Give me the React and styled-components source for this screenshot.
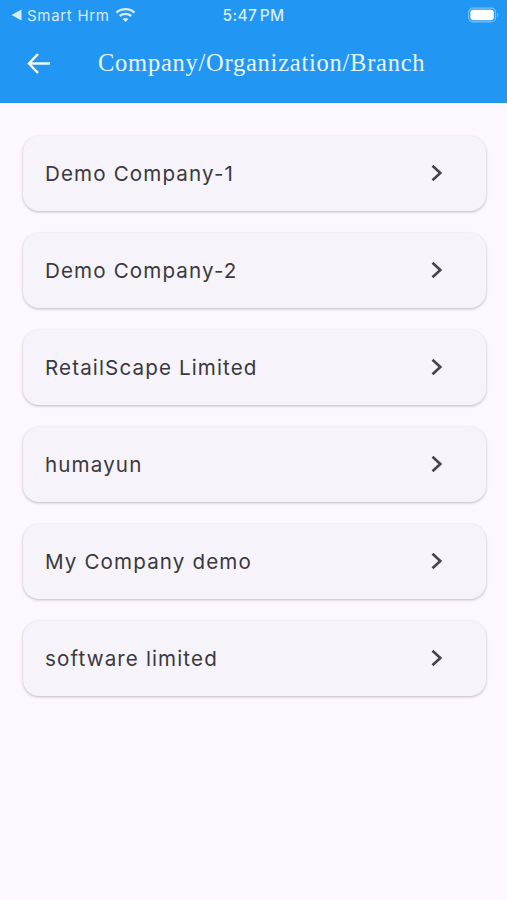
import React from "react";
import styled, { createGlobalStyle } from "styled-components";

const Global = createGlobalStyle`
  html, body { margin: 0; padding: 0; background: #fdf7ff; }
  #root { width: 507px; height: 900px; }
`;

const Screen = styled.div`
  width: 507px;
  height: 900px;
  background: #fdf7ff;
  overflow: hidden;
  font-family: "Inter", "Liberation Sans", sans-serif;
`;

const Header = styled.header`
  height: 103px;
  background: #2196f3;
  color: #fff;
  display: flex;
  flex-direction: column;
`;

const StatusBar = styled.div`
  height: 30px;
  display: grid;
  grid-template-columns: 1fr auto 1fr;
  align-items: center;
  padding: 0 8px 0 11px;
  color: #d6ecfd;
`;

const StatusLeft = styled.div`
  display: flex;
  align-items: center;
  gap: 5px;
  font-size: 15px;
  letter-spacing: 0.7px;
`;

const StatusTime = styled.div`
  font-size: 15.5px;
  font-weight: 500;
  letter-spacing: 0.35px;
  word-spacing: -2px;
  margin-right: 3px;
`;

const StatusRight = styled.div`
  display: flex;
  justify-content: flex-end;
`;

const TitleRow = styled.div`
  flex: 1;
  display: flex;
  align-items: center;
  padding: 0 0 7px 27px;
`;

const BackButton = styled.div`
  width: 24px;
  height: 24px;
  display: flex;
  align-items: center;
  justify-content: center;
  margin-top: -1px;
`;

const Title = styled.h1`
  margin: 0 0 0 47px;
  font-family: "Liberation Serif", serif;
  font-size: 24.5px;
  font-weight: 400;
  letter-spacing: 0.75px;
  color: #eaf5fe;
`;

const List = styled.ul`
  list-style: none;
  margin: 0;
  padding: 33px 21px 0 23px;
  display: flex;
  flex-direction: column;
  gap: 22px;
`;

const Row = styled.li`
  height: 75px;
  box-sizing: border-box;
  padding: 0 43px 0 22px;
  border-radius: 16px;
  background: #f7f3fa;
  box-shadow: 0 1px 3px rgba(0, 0, 0, 0.25);
  display: flex;
  align-items: center;
  justify-content: space-between;
`;

const RowLabel = styled.span`
  font-size: 20.6px;
  letter-spacing: 1.12px;
  color: #3a393e;
`;

const ChevronIcon = styled.svg`
  margin-bottom: 2px;
`;

const Wifi = () => (
  <svg width="21" height="16" viewBox="0 0 21 16" fill="none" stroke="currentColor" strokeWidth="2.4">
    <path d="M1.5 5.6 C6.5 1 14.5 1 19.5 5.6" />
    <path d="M4.8 9 C8 6.2 13 6.2 16.2 9" />
    <path d="M10.5 15 L7.6 12 C9.2 10.7 11.8 10.7 13.4 12 Z" fill="currentColor" stroke="none" />
  </svg>
);

const Battery = () => (
  <svg width="31" height="16" viewBox="0 0 33 16">
    <rect x="0.7" y="0.7" width="28.6" height="14.6" rx="4.5" fill="none" stroke="#7cc0f7" strokeWidth="1.2" />
    <rect x="2.5" y="2.5" width="25" height="11" rx="3" fill="#fff" />
    <path d="M31 5.5 C32 6 32.4 7 32.4 8 C32.4 9 32 10 31 10.5 Z" fill="#7cc0f7" />
  </svg>
);

const BackTriangle = () => (
  <svg width="11" height="12" viewBox="0 0 11 12">
    <path d="M0.5 6 L10.5 0.5 V11.5 Z" fill="currentColor" />
  </svg>
);

const ArrowLeft = () => (
  <svg width="24" height="24" viewBox="0 0 24 24" fill="none" stroke="#fff" strokeWidth="2.4">
    <path d="M23 12.5 H2" />
    <path d="M11 3 L2 12.5 L11 22" />
  </svg>
);

const Chevron = () => (
  <ChevronIcon width="12" height="18" viewBox="0 0 12 18" fill="none" stroke="#45434a" strokeWidth="2.6">
    <path d="M1.5 1.8 L9.3 9 L1.5 16.2" />
  </ChevronIcon>
);

const companies = [
  "Demo Company-1",
  "Demo Company-2",
  "RetailScape Limited",
  "humayun",
  "My Company demo",
  "software limited",
];

export default function App() {
  return (
    <Screen>
      <Global />
      <Header>
        <StatusBar>
          <StatusLeft>
            <BackTriangle />
            <span>Smart Hrm</span>
            <Wifi />
          </StatusLeft>
          <StatusTime>5:47 PM</StatusTime>
          <StatusRight>
            <Battery />
          </StatusRight>
        </StatusBar>
        <TitleRow>
          <BackButton>
            <ArrowLeft />
          </BackButton>
          <Title>Company/Organization/Branch</Title>
        </TitleRow>
      </Header>
      <List>
        {companies.map((name) => (
          <Row key={name}>
            <RowLabel>{name}</RowLabel>
            <Chevron />
          </Row>
        ))}
      </List>
    </Screen>
  );
}
